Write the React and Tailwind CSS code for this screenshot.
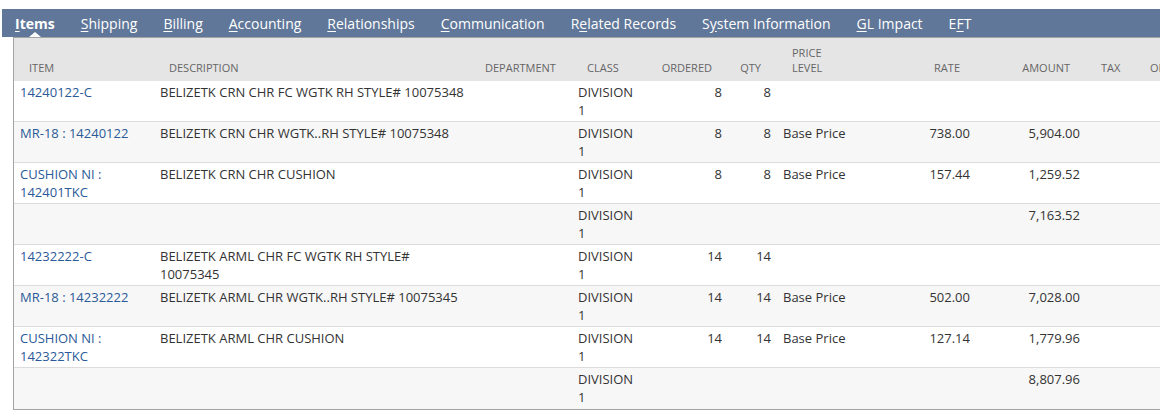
import React from "react";

const tabs = [
  { pre: "", key: "I", post: "tems", active: true },
  { pre: "", key: "S", post: "hipping" },
  { pre: "", key: "B", post: "illing" },
  { pre: "", key: "A", post: "ccounting" },
  { pre: "", key: "R", post: "elationships" },
  { pre: "", key: "C", post: "ommunication" },
  { pre: "R", key: "e", post: "lated Records" },
  { pre: "S", key: "y", post: "stem Information" },
  { pre: "", key: "G", post: "L Impact" },
  { pre: "E", key: "F", post: "T" },
];

// column widths / alignment
const cols = [
  { label: "ITEM", w: "w-[140px]" },
  { label: "DESCRIPTION", w: "w-[316px]" },
  { label: "DEPARTMENT", w: "w-[102px]" },
  { label: "CLASS", w: "w-[74px]" },
  { label: "ORDERED", w: "w-[82px]", right: true },
  { label: "QTY", w: "w-[49px]", right: true },
  { label: "PRICE\nLEVEL", w: "w-[103px]" },
  { label: "RATE", w: "w-[96px]", right: true },
  { label: "AMOUNT", w: "w-[110px]", right: true },
  { label: "TAX", w: "w-[49px]" },
  { label: "OPTIONS", w: "w-[96px]" },
];

const rows = [
  ["14240122-C", "BELIZETK CRN CHR FC WGTK RH STYLE# 10075348", "", "DIVISION\n1", "8", "8", "", "", ""],
  ["MR-18 : 14240122", "BELIZETK CRN CHR WGTK..RH STYLE# 10075348", "", "DIVISION\n1", "8", "8", "Base Price", "738.00", "5,904.00"],
  ["CUSHION NI :\n142401TKC", "BELIZETK CRN CHR CUSHION", "", "DIVISION\n1", "8", "8", "Base Price", "157.44", "1,259.52"],
  ["", "", "", "DIVISION\n1", "", "", "", "", "7,163.52"],
  ["14232222-C", "BELIZETK ARML CHR FC WGTK RH STYLE#\n10075345", "", "DIVISION\n1", "14", "14", "", "", ""],
  ["MR-18 : 14232222", "BELIZETK ARML CHR WGTK..RH STYLE# 10075345", "", "DIVISION\n1", "14", "14", "Base Price", "502.00", "7,028.00"],
  ["CUSHION NI :\n142322TKC", "BELIZETK ARML CHR CUSHION", "", "DIVISION\n1", "14", "14", "Base Price", "127.14", "1,779.96"],
  ["", "", "", "DIVISION\n1", "", "", "", "", "8,807.96"],
];

export default function App() {
  return (
    <div className="w-[1160px] h-[417px] overflow-hidden bg-white pt-[9px] pl-[2px] font-['Open_Sans',sans-serif]">
      {/* tab bar */}
      <div className="flex h-[28px] items-center bg-[#607799] text-[14px] text-white">
        {tabs.map((t) => (
          <div
            key={t.key + t.post}
            className={`relative flex h-full shrink-0 items-center px-[13px] whitespace-nowrap ${t.active ? "font-bold" : ""}`}
          >
            <span>
              {t.pre}
              <u className="underline-offset-2">{t.key}</u>
              {t.post}
            </span>
            {t.active && (
              <span className="absolute bottom-0 left-1/2 -translate-x-1/2 h-0 w-0 border-l-[6px] border-r-[6px] border-b-[5px] border-l-transparent border-r-transparent border-b-white" />
            )}
          </div>
        ))}
      </div>

      {/* item list */}
      <div className="ml-[11px] overflow-hidden border-t border-l border-b border-[#a3a3a3]">
        <div className="flex h-[43px] w-[1230px] bg-[#e5e5e5] text-[11px] leading-[15px] text-[#666]">
          {cols.map((c) => (
            <div
              key={c.label}
              className={`${c.w} shrink-0 flex items-end pl-[15px] pr-[16px] pb-[6px] whitespace-pre ${c.right ? "justify-end text-right" : ""}`}
            >
              {c.label}
            </div>
          ))}
        </div>
        {rows.map((r, i) => (
          <div
            key={i}
            className={`flex h-[41px] w-[1230px] text-[13px] leading-[18px] text-[#333] ${i < rows.length - 1 ? "border-b border-[#dcdcdc]" : ""} ${i % 2 === 1 ? "bg-[#f7f7f7]" : "bg-white"}`}
          >
            {cols.map((c, j) => (
              <div
                key={j}
                className={`${c.w} shrink-0 px-[6px] pt-[2px] whitespace-pre ${c.right ? "text-right" : ""} ${j === 0 ? "text-[#2b5a98]" : ""}`}
              >
                {r[j] || ""}
              </div>
            ))}
          </div>
        ))}
      </div>
    </div>
  );
}
